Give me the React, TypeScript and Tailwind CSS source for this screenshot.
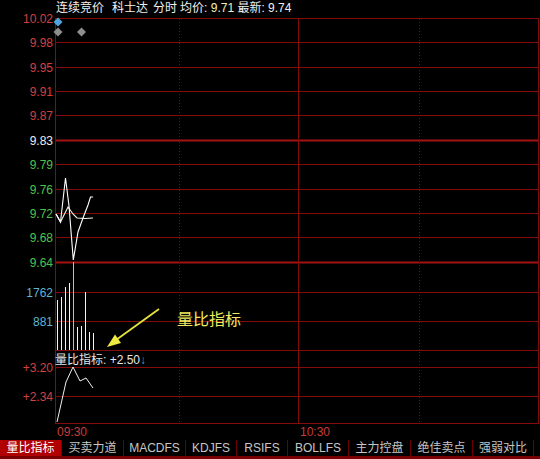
import React from "react";

// chart colours
const GRID = "#860c0c";
const GRID_BOLD = "#a41212";
const RED = "#d24040";
const GREEN = "#4cc44c";
const CYAN = "#5ab6d6";

type Tick = { label: string; y: number; color: string; bold?: boolean };

const priceTicks: Tick[] = [
    { label: "10.02", y: 18, color: RED },
    { label: "9.98", y: 42, color: RED },
    { label: "9.95", y: 67, color: RED },
    { label: "9.91", y: 91, color: RED },
    { label: "9.87", y: 115, color: RED },
    { label: "9.83", y: 140, color: "#ececec", bold: true },
    { label: "9.79", y: 164, color: GREEN },
    { label: "9.76", y: 189, color: GREEN },
    { label: "9.72", y: 213, color: GREEN },
    { label: "9.68", y: 237, color: GREEN },
    { label: "9.64", y: 262, color: GREEN, bold: true },
];

const volTicks: Tick[] = [
    { label: "1762", y: 292, color: CYAN },
    { label: "881", y: 321, color: CYAN },
    { label: "", y: 350, color: CYAN },
];

const lbTicks: Tick[] = [
    { label: "+3.20", y: 367, color: RED },
    { label: "+2.34", y: 396, color: RED },
    { label: "", y: 423, color: RED },
];

// minute volume bars: [x, top]
const volBars: [number, number][] = [
    [57, 300],
    [61, 297],
    [65, 287],
    [69, 283],
    [73, 262],
    [77, 327],
    [81, 326],
    [85, 292],
    [89, 332],
    [93, 333],
];

const pricePath = "M56,214 L60.5,222 L65.5,178 L69,206 L73.3,260 L78,232 L83,218 L88,205 L90.5,197 L93,197";
const avgPath = "M56,214 L60.5,222 L68,207 L73,214 L77,218 L85,218.5 L93,218";
const lbPath = "M57,422 L66,382 L73,367 L80,381 L86,378 L93,388";

const tabs = [
    { label: "量比指标", w: "w-[61px]", active: true },
    { label: "买卖力道", w: "w-[62px]" },
    { label: "MACDFS", w: "w-[62px]" },
    { label: "KDJFS", w: "w-[51px]" },
    { label: "RSIFS", w: "w-[51px]" },
    { label: "BOLLFS", w: "w-[61px]" },
    { label: "主力控盘", w: "w-[62px]" },
    { label: "绝佳卖点", w: "w-[62px]" },
    { label: "强弱对比", w: "w-[61px]" },
];

function Header() {
    return (
        <div className="flex h-[16px] items-center pl-[56px] text-[12px] leading-none text-[#f0f0f0] whitespace-pre">
            <span>连续竞价</span>
            <span className="ml-[8px]">科士达</span>
            <span className="ml-[5px]">分时</span>
            <span className="ml-[3px]">均价: </span>
            <span className="text-[#f2f0b4]">9.71</span>
            <span> 最新: 9.74</span>
        </div>
    );
}

function AxisLabel({ t }: { t: Tick }) {
    if (!t.label) return null;
    return (
        <text x={53} y={t.y + 4.5} textAnchor="end" fontSize={12} fill={t.color}>
            {t.label}
        </text>
    );
}

function Chart() {
    const allTicks = [...priceTicks, ...volTicks, ...lbTicks];
    return (
        <svg width={540} height={408} viewBox="0 16 540 408" className="block overflow-visible">
            {/* horizontal grid */}
            {allTicks.map((t) => (
                <line
                    key={`h${t.y}`}
                    x1={55}
                    x2={539}
                    y1={t.y + 0.5}
                    y2={t.y + 0.5}
                    stroke={t.bold ? GRID_BOLD : GRID}
                    strokeWidth={t.bold ? 2 : 1}
                />
            ))}

            {/* vertical grid */}
            <line x1={55.5} x2={55.5} y1={18} y2={424} stroke={GRID} />
            <line x1={298.5} x2={298.5} y1={18} y2={424} stroke={GRID} />
            <line x1={538.5} x2={538.5} y1={18} y2={424} stroke={GRID} />
            <line x1={179.5} x2={179.5} y1={19} y2={423} stroke="#6a1010" strokeDasharray="1 2" />
            <line x1={419.5} x2={419.5} y1={19} y2={423} stroke="#6a1010" strokeDasharray="1 2" />

            {/* axis labels */}
            {allTicks.map((t) => (
                <AxisLabel key={`l${t.y}`} t={t} />
            ))}

            {/* auction markers */}
            <polygon points="58,17.5 62.5,22 58,26.5 53.5,22" fill="#4aa6dc" />
            <polygon points="58,27.5 62.5,32 58,36.5 53.5,32" fill="#8e8e8e" />
            <polygon points="81.5,27.5 86,32 81.5,36.5 77,32" fill="#8e8e8e" />

            {/* volume */}
            {volBars.map(([x, top], i) => (
                <line
                    key={x}
                    x1={x + 0.5}
                    x2={x + 0.5}
                    y1={top}
                    y2={350}
                    stroke={i === 4 ? "#7cd6d6" : "#eef6f6"}
                    strokeWidth={1}
                />
            ))}

            {/* price + average */}
            <path d={avgPath} fill="none" stroke="#f4f4e4" strokeWidth={1.1} />
            <path d={pricePath} fill="none" stroke="#ffffff" strokeWidth={1.1} />

            {/* indicator title */}
            <text x={55} y={364} fontSize={12} fill="#e6e6e6">
                量比指标: +2.50<tspan fill="#3ea6a6">↓</tspan>
            </text>

            {/* 量比 line */}
            <path d={lbPath} fill="none" stroke="#f0f0f0" strokeWidth={1} />

            {/* annotation */}
            <line x1={159} y1={309} x2={116} y2={340} stroke="#e6e23c" strokeWidth={1.8} />
            <polygon points="107,347 121,343 115,334.5" fill="#eeea40" />
            <text x={177} y={325} fontSize={16} fill="#f2ea5e">
                量比指标
            </text>
        </svg>
    );
}

function TimeAxis() {
    return (
        <div className="flex h-[16px] items-center text-[12px] leading-none text-[#c83c3c]">
            <span className="w-[300px] pl-[57px]">09:30</span>
            <span>10:30</span>
        </div>
    );
}

function TabBar() {
    return (
        <div className="flex h-[19px] border-b-[3px] border-[#780000] bg-black text-[12px] leading-none">
            {tabs.map((t) => (
                <div
                    key={t.label}
                    className={
                        t.active
                            ? `${t.w} flex items-center justify-center bg-[#b00000] text-white`
                            : `${t.w} flex items-center justify-center border-l border-[#6a0000] text-[#c6c6c6]`
                    }
                >
                    {t.label}
                </div>
            ))}
            <div className="flex-1 border-l border-[#6a0000]" />
        </div>
    );
}

export default function App() {
    return (
        <div className="w-[540px] h-[459px] overflow-hidden bg-black font-['Liberation_Sans','Noto_Sans_CJK_SC',sans-serif] select-none">
            <Header />
            <Chart />
            <TimeAxis />
            <TabBar />
        </div>
    );
}
